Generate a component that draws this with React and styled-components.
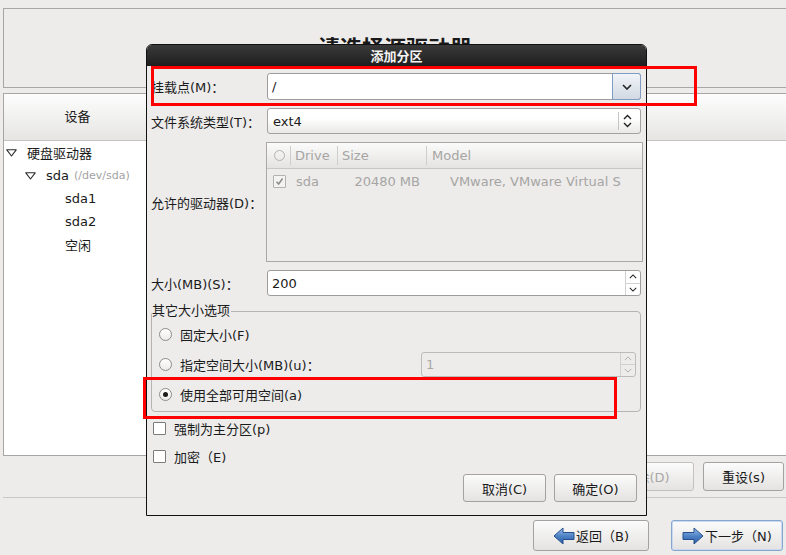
import React from 'react';
import styled, { createGlobalStyle } from 'styled-components';

const GlobalStyle = createGlobalStyle`
  html, body {
    margin: 0;
    padding: 0;
    background: #edeceb;
  }
  body {
    font-family: "DejaVu Sans", "Noto Sans CJK SC", sans-serif;
    font-size: 13px;
    color: #1a1a1a;
  }
`;

const Page = styled.div`
  position: relative;
  width: 786px;
  height: 555px;
  overflow: hidden;
  padding: 8px 0 0 3px;
  box-sizing: border-box;
  display: flex;
  flex-direction: column;
`;

const TitleBox = styled.div`
  height: 78px;
  border: 1px solid #a7a6a4;
  border-right: none;
  display: flex;
  align-items: center;
  justify-content: center;
  font-size: 22px;
  font-weight: bold;
  span {
    margin-top: -4px;
  }
`;

const Panel = styled.div`
  margin-top: 5px;
  height: 361px;
  border: 1px solid #a7a6a4;
  border-right: none;
  background: #fff;
  display: flex;
  flex-direction: column;
`;

const PanelHead = styled.div`
  height: 46px;
  flex: none;
  display: flex;
  border-bottom: 1px solid #c3c2c0;
  background: linear-gradient(#fdfdfd, #e6e5e3);
`;

const HeadCell = styled.div`
  width: ${p => p.$w}px;
  display: flex;
  align-items: center;
  justify-content: center;
  padding-bottom: 3px;
`;

const TreeRow = styled.div`
  height: 23px;
  display: flex;
  align-items: center;
  padding-left: ${p => 2 + p.$level * 19}px;
`;

const Expander = styled.span`
  width: 21px;
  flex: none;
  display: flex;
  align-items: center;
`;

const DevPath = styled.span`
  margin-left: 5px;
  font-size: 11px;
  color: #a2a2a2;
`;

const ActionRow = styled.div`
  margin-top: 6px;
  display: flex;
  justify-content: flex-end;
  gap: 9px;
  padding-right: 2px;
`;

const Separator = styled.div`
  margin-top: 6px;
  height: 1px;
  background: #c9c8c6;
`;

const NavRow = styled.div`
  margin-top: 22px;
  display: flex;
  justify-content: flex-end;
  gap: 22px;
  padding-right: 3px;
`;

const Button = styled.div`
  width: ${p => p.$w || 80}px;
  height: ${p => p.$h || 29}px;
  box-sizing: border-box;
  border: 1px solid ${p => (p.$focus ? '#86a6d0' : p.$disabled ? '#c2c1bf' : '#a3a2a0')};
  border-radius: 3px;
  background: linear-gradient(#fbfbfb, #e4e3e1);
  color: ${p => (p.$disabled ? '#a9a8a6' : '#1a1a1a')};
  display: flex;
  align-items: center;
  justify-content: center;
  gap: 1px;
  padding-right: ${p => (p.$disabled ? 15 : 0)}px;
  box-shadow: ${p => (p.$focus ? 'inset 0 0 0 1px #c9daf0' : 'none')};
`;

/* dialog */

const Dialog = styled.div`
  position: absolute;
  left: 146px;
  top: 44px;
  width: 501px;
  height: 472px;
  box-sizing: border-box;
  border: 1px solid #111;
  border-radius: 6px 6px 0 0;
  background: #edeceb;
  display: flex;
  flex-direction: column;
  overflow: hidden;
`;

const DialogTitle = styled.div`
  height: 21px;
  flex: none;
  background: linear-gradient(#3a3a3a, #1e1e1e);
  color: #f4f4f4;
  font-weight: bold;
  display: flex;
  align-items: center;
  justify-content: center;
`;

const DialogBody = styled.div`
  flex: 1;
  padding: 7px 5px 0 4px;
  display: flex;
  flex-direction: column;
`;

const FormGrid = styled.div`
  display: grid;
  grid-template-columns: 116px 1fr;
  row-gap: 8px;
  align-items: center;
`;

const Entry = styled.div`
  height: ${p => p.$h || 26}px;
  box-sizing: border-box;
  border: 1px solid ${p => (p.$disabled ? '#bdbcba' : '#9d9c9a')};
  border-radius: 3px;
  background: ${p => (p.$disabled ? '#edeceb' : '#fff')};
  color: ${p => (p.$disabled ? '#a8a7a5' : '#1a1a1a')};
  display: flex;
  align-items: stretch;
`;

const EntryText = styled.span`
  flex: 1;
  display: flex;
  align-items: center;
  padding-left: 4px;
`;

const DropButton = styled.div`
  width: 27px;
  margin: -1px -1px -1px 0;
  border: 1px solid #7f9cc4;
  border-radius: 0 3px 3px 0;
  background: linear-gradient(#f1f4f8, #d2d9e3);
  display: flex;
  align-items: center;
  justify-content: center;
`;

const Combo = styled.div`
  height: 26px;
  box-sizing: border-box;
  border: 1px solid #a3a2a0;
  border-radius: 3px;
  background: linear-gradient(#ffffff 40%, #e9e8e6);
  display: flex;
  align-items: center;
  padding-right: 4px;
`;

const ComboText = styled.span`
  flex: 1;
  padding-left: 5px;
`;

const ComboArrows = styled.span`
  width: 17px;
  height: 18px;
  border-left: 1px solid #c6c5c3;
  display: flex;
  align-items: center;
  justify-content: center;
`;

const SpinButtons = styled.div`
  width: 14px;
  display: flex;
  flex-direction: column;
  border-left: 1px solid #d2d1cf;
  span {
    flex: 1;
    display: flex;
    align-items: center;
    justify-content: center;
  }
  span + span {
    border-top: 1px solid #d2d1cf;
  }
`;

const DriveList = styled.div`
  height: 120px;
  box-sizing: border-box;
  margin: 0 -2px 0 -1px;
  border: 1px solid #a9a8a6;
  color: #a6a5a3;
`;

const ListGrid = styled.div`
  display: grid;
  grid-template-columns: 23px 47px 89px 1fr;
  height: ${p => p.$h}px;
  background: ${p => (p.$head ? 'linear-gradient(#fbfbfb, #e4e3e1)' : 'transparent')};
  border-bottom: ${p => (p.$head ? '1px solid #c8c7c5' : 'none')};
`;

const ListCell = styled.div`
  display: flex;
  align-items: center;
  justify-content: ${p => (p.$right ? 'flex-end' : 'flex-start')};
  padding: 0 ${p => p.$pr || 0}px 0 ${p => p.$pl || 0}px;
  border-left: ${p => (p.$sep ? '1px solid #cfcecc' : 'none')};
  margin: ${p => (p.$sep ? '3px 0' : '0')};
  white-space: nowrap;
  overflow: hidden;
`;

const Circle = styled.span`
  width: 9px;
  height: 9px;
  border: 1px solid #b3b2b0;
  border-radius: 50%;
`;

const Frame = styled.fieldset`
  margin: 7px 0 0 0;
  padding: 0 4px 2px 7px;
  border: 1px solid #b5b4b2;
  border-radius: 4px;
  min-width: 0;
`;

const Legend = styled.legend`
  margin-left: -7px;
  padding: 0 1px 0 0;
  line-height: 16px;
`;

const OptionRow = styled.div`
  height: 30px;
  display: flex;
  align-items: center;
  gap: 8px;
`;

const Radio = styled.span`
  width: 11px;
  height: 11px;
  flex: none;
  border: 1px solid #8d8c8a;
  border-radius: 50%;
  background: linear-gradient(#ffffff, #ecebe9);
  display: flex;
  align-items: center;
  justify-content: center;
  &::after {
    content: '';
    width: 5px;
    height: 5px;
    border-radius: 50%;
    background: ${p => (p.$checked ? '#1a1a1a' : 'transparent')};
  }
`;

const CheckRow = styled.div`
  height: 28px;
  margin-top: ${p => p.$gap || 0}px;
  display: flex;
  align-items: center;
  gap: 8px;
  padding-left: 2px;
`;

const Check = styled.span`
  width: 11px;
  height: 11px;
  flex: none;
  border: 1px solid ${p => (p.$muted ? '#b3b2b0' : '#7c7b79')};
  border-radius: 1px;
  background: ${p => (p.$muted ? '#f3f3f2' : '#fff')};
  display: flex;
  align-items: center;
  justify-content: center;
`;

const DialogButtons = styled.div`
  margin-top: 4px;
  display: flex;
  justify-content: flex-end;
  gap: 8px;
  padding-right: 4px;
`;

const Marker = styled.div`
  position: absolute;
  left: ${p => p.$x}px;
  top: ${p => p.$y}px;
  width: ${p => p.$w}px;
  height: ${p => p.$h}px;
  box-sizing: border-box;
  border: 3px solid #ff0000;
  pointer-events: none;
`;

function Triangle() {
  return (
    <svg width="11" height="8" viewBox="0 0 11 8">
      <path d="M0.8 0.8 H10.2 L5.5 7 Z" fill="none" stroke="#2a2a2a" strokeWidth="1.1" strokeLinejoin="round" />
    </svg>
  );
}

function Chevron({ up, color = '#222', w = 10, h = 6, sw = 1.6 }) {
  return (
    <svg width={w} height={h} viewBox="0 0 10 6">
      <path d={up ? 'M1 5 L5 1 L9 5' : 'M1 1 L5 5 L9 1'} fill="none" stroke={color} strokeWidth={sw} />
    </svg>
  );
}

function Tick({ color }) {
  return (
    <svg width="9" height="9" viewBox="0 0 9 9">
      <path d="M1.5 4.8 L3.6 7 L7.6 1.5" fill="none" stroke={color} strokeWidth="1.5" />
    </svg>
  );
}

function Arrow({ right }) {
  const id = right ? 'arrowR' : 'arrowL';
  return (
    <svg width="22" height="18" viewBox="0 0 22 18" style={{ transform: right ? 'scaleX(-1)' : 'none' }}>
      <defs>
        <linearGradient id={id} x1="0" y1="0" x2="0" y2="1">
          <stop offset="0" stopColor="#9bbfeb" />
          <stop offset="0.5" stopColor="#4f83c6" />
          <stop offset="1" stopColor="#2a5ca3" />
        </linearGradient>
      </defs>
      <path d="M1 9 L10 1 V5.5 H21 V12.5 H10 V17 Z" fill={`url(#${id})`} stroke="#25508c" strokeWidth="1" strokeLinejoin="round" />
    </svg>
  );
}

const tree = [
  { level: 0, open: true, text: '硬盘驱动器' },
  { level: 1, open: true, text: 'sda', path: '(/dev/sda)' },
  { level: 2, text: 'sda1' },
  { level: 2, text: 'sda2' },
  { level: 2, text: '空闲' },
];

export default function App() {
  return (
    <>
      <GlobalStyle />
      <Page>
        <TitleBox>
          <span>请选择源驱动器</span>
        </TitleBox>
        <Panel>
          <PanelHead>
            <HeadCell $w={147}>设备</HeadCell>
          </PanelHead>
          {tree.map((row, i) => (
            <TreeRow key={i} $level={row.level}>
              <Expander>{row.open && <Triangle />}</Expander>
              {row.text}
              {row.path && <DevPath>{row.path}</DevPath>}
            </TreeRow>
          ))}
        </Panel>
        <ActionRow>
          <Button $disabled>删除(D)</Button>
          <Button $w={81}>重设(s)</Button>
        </ActionRow>
        <Separator />
        <NavRow>
          <Button $w={116} $h={31}>
            <Arrow />返回（B)
          </Button>
          <Button $w={112} $h={31} $focus>
            <Arrow right />下一步（N)
          </Button>
        </NavRow>

        <Dialog>
          <DialogTitle>添加分区</DialogTitle>
          <DialogBody>
            <FormGrid>
              <span>挂载点(M)：</span>
              <Entry $h={27}>
                <EntryText>/</EntryText>
                <DropButton>
                  <Chevron />
                </DropButton>
              </Entry>

              <span>文件系统类型(T)：</span>
              <Combo>
                <ComboText>ext4</ComboText>
                <ComboArrows>
                  <svg width="9" height="14" viewBox="0 0 9 14">
                    <path d="M1 5 L4.5 1.5 L8 5 M1 9 L4.5 12.5 L8 9" fill="none" stroke="#222" strokeWidth="1.4" />
                  </svg>
                </ComboArrows>
              </Combo>

              <span>允许的驱动器(D)：</span>
              <DriveList>
                <ListGrid $head $h={25}>
                  <ListCell $pl={7}><Circle /></ListCell>
                  <ListCell $sep $pl={4}>Drive</ListCell>
                  <ListCell $sep $pl={4}>Size</ListCell>
                  <ListCell $sep $pl={5}>Model</ListCell>
                </ListGrid>
                <ListGrid $h={24}>
                  <ListCell $pl={6}><Check $muted><Tick color="#8d8c8a" /></Check></ListCell>
                  <ListCell $pl={6}>sda</ListCell>
                  <ListCell $right $pr={6}>20480 MB</ListCell>
                  <ListCell $pl={24}>VMware, VMware Virtual S</ListCell>
                </ListGrid>
              </DriveList>

              <span>大小(MB)(S)：</span>
              <Entry>
                <EntryText>200</EntryText>
                <SpinButtons>
                  <span><Chevron up w={8} h={5} sw={1.3} /></span>
                  <span><Chevron w={8} h={5} sw={1.3} /></span>
                </SpinButtons>
              </Entry>
            </FormGrid>

            <Frame>
              <Legend>其它大小选项</Legend>
              <OptionRow>
                <Radio />固定大小(F)
              </OptionRow>
              <OptionRow>
                <Radio />指定空间大小(MB)(u)：
                <span style={{ flex: 1 }} />
                <Entry $disabled $h={25} style={{ width: 215 }}>
                  <EntryText>1</EntryText>
                  <SpinButtons>
                    <span><Chevron up color="#b0afad" w={8} h={5} sw={1.2} /></span>
                    <span><Chevron color="#b0afad" w={8} h={5} sw={1.2} /></span>
                  </SpinButtons>
                </Entry>
              </OptionRow>
              <OptionRow>
                <Radio $checked />使用全部可用空间(a)
              </OptionRow>
            </Frame>

            <CheckRow $gap={2}>
              <Check />强制为主分区(p)
            </CheckRow>
            <CheckRow>
              <Check />加密（E)
            </CheckRow>

            <DialogButtons>
              <Button $w={83} $h={28}>取消(C)</Button>
              <Button $w={83} $h={28}>确定(O)</Button>
            </DialogButtons>
          </DialogBody>
        </Dialog>

        <Marker $x={151} $y={66} $w={546} $h={40} />
        <Marker $x={143} $y={377} $w={474} $h={42} />
      </Page>
    </>
  );
}
